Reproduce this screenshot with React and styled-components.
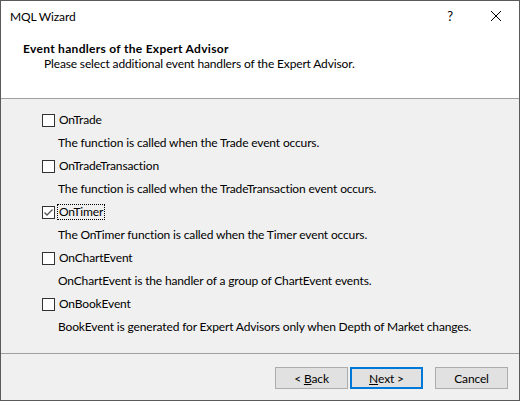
import React from 'react';
import styled, { createGlobalStyle } from 'styled-components';

const GlobalStyle = createGlobalStyle`
  html, body { margin: 0; padding: 0; background: #ffffff; }
  body { font-family: Lato, "Noto Sans", sans-serif; font-size: 12px; color: #000; letter-spacing: -0.15px; }
  * { box-sizing: border-box; }
`;

const Window = styled.div`
  width: 520px;
  height: 401px;
  border: 1px solid #5a5a5a;
  background: #f0f0f0;
  display: flex;
  flex-direction: column;
`;

const TitleBar = styled.div`
  height: 30px;
  background: #ffffff;
  display: flex;
  align-items: center;
  padding-left: 9px;
`;

const Title = styled.span`
  flex: 1;
  font-size: 12px;
`;

const CaptionButton = styled.div`
  width: 46px;
  height: 30px;
  display: flex;
  align-items: center;
  justify-content: center;
  font-size: 13px;
`;

const Header = styled.div`
  height: 68px;
  background: #ffffff;
  border-bottom: 1px solid #a0a0a0;
  padding: 10px 0 0 22px;
  display: flex;
  flex-direction: column;
`;

const HeaderTitle = styled.div`
  font-weight: bold;
  line-height: 15px;
  letter-spacing: 0.3px;
`;

const HeaderSub = styled.div`
  line-height: 15px;
  padding-left: 21px;
`;

const Body = styled.div`
  flex: 1;
  padding: 13px 0 0 41px;
  display: flex;
  flex-direction: column;
`;

const Item = styled.div`
  display: flex;
  flex-direction: column;
`;

const CheckRow = styled.label`
  height: 16px;
  display: flex;
  align-items: center;
  gap: 2px;
  margin-bottom: 7px;
`;

const Box = styled.span`
  width: 13px;
  height: 13px;
  border: 1px solid #333333;
  background: #ffffff;
  display: flex;
  align-items: center;
  justify-content: center;
`;

const Label = styled.span`
  padding: 0 1px;
  line-height: 14px;
  border: 1px dotted ${p => (p.focused ? '#000' : 'transparent')};
`;

const Desc = styled.div`
  height: 16px;
  line-height: 16px;
  padding-left: 16px;
  margin-bottom: 7px;
`;

const Footer = styled.div`
  height: 47px;
  border-top: 1px solid #a0a0a0;
  display: flex;
  justify-content: flex-end;
  padding: 13px 11px 0 0;
`;

const Button = styled.div`
  width: 73px;
  height: 22px;
  background: #e1e1e1;
  border: ${p => (p.primary ? '2px solid #0078d7' : '1px solid #adadad')};
  display: flex;
  align-items: center;
  justify-content: center;
  white-space: pre;
  margin-left: ${p => p.gap || 0}px;
  u { text-decoration: underline; }
`;

const Check = () => (
  <svg width="11" height="11" viewBox="0 0 11 11">
    <path d="M1.5 5.5 L4 8 L9.5 2.5" fill="none" stroke="#555" strokeWidth="1.3" />
  </svg>
);

const items = [
  { name: 'OnTrade', desc: 'The function is called when the Trade event occurs.' },
  { name: 'OnTradeTransaction', desc: 'The function is called when the TradeTransaction event occurs.' },
  { name: 'OnTimer', desc: 'The OnTimer function is called when the Timer event occurs.', checked: true },
  { name: 'OnChartEvent', desc: 'OnChartEvent is the handler of a group of ChartEvent events.' },
  { name: 'OnBookEvent', desc: 'BookEvent is generated for Expert Advisors only when Depth of Market changes.' },
];

export default function App() {
  return (
    <>
      <GlobalStyle />
      <Window>
        <TitleBar>
          <Title>MQL Wizard</Title>
          <CaptionButton>?</CaptionButton>
          <CaptionButton>
            <svg width="10" height="10" viewBox="0 0 10 10">
              <path d="M0 0 L10 10 M10 0 L0 10" stroke="#000" strokeWidth="1" />
            </svg>
          </CaptionButton>
        </TitleBar>
        <Header>
          <HeaderTitle>Event handlers of the Expert Advisor</HeaderTitle>
          <HeaderSub>Please select additional event handlers of the Expert Advisor.</HeaderSub>
        </Header>
        <Body>
          {items.map(it => (
            <Item key={it.name}>
              <CheckRow>
                <Box>{it.checked && <Check />}</Box>
                <Label focused={it.checked}>{it.name}</Label>
              </CheckRow>
              <Desc>{it.desc}</Desc>
            </Item>
          ))}
        </Body>
        <Footer>
          <Button>{'< '}<u>B</u>ack</Button>
          <Button primary gap={2}><u>N</u>ext{' >'}</Button>
          <Button gap={12}>Cancel</Button>
        </Footer>
      </Window>
    </>
  );
}
